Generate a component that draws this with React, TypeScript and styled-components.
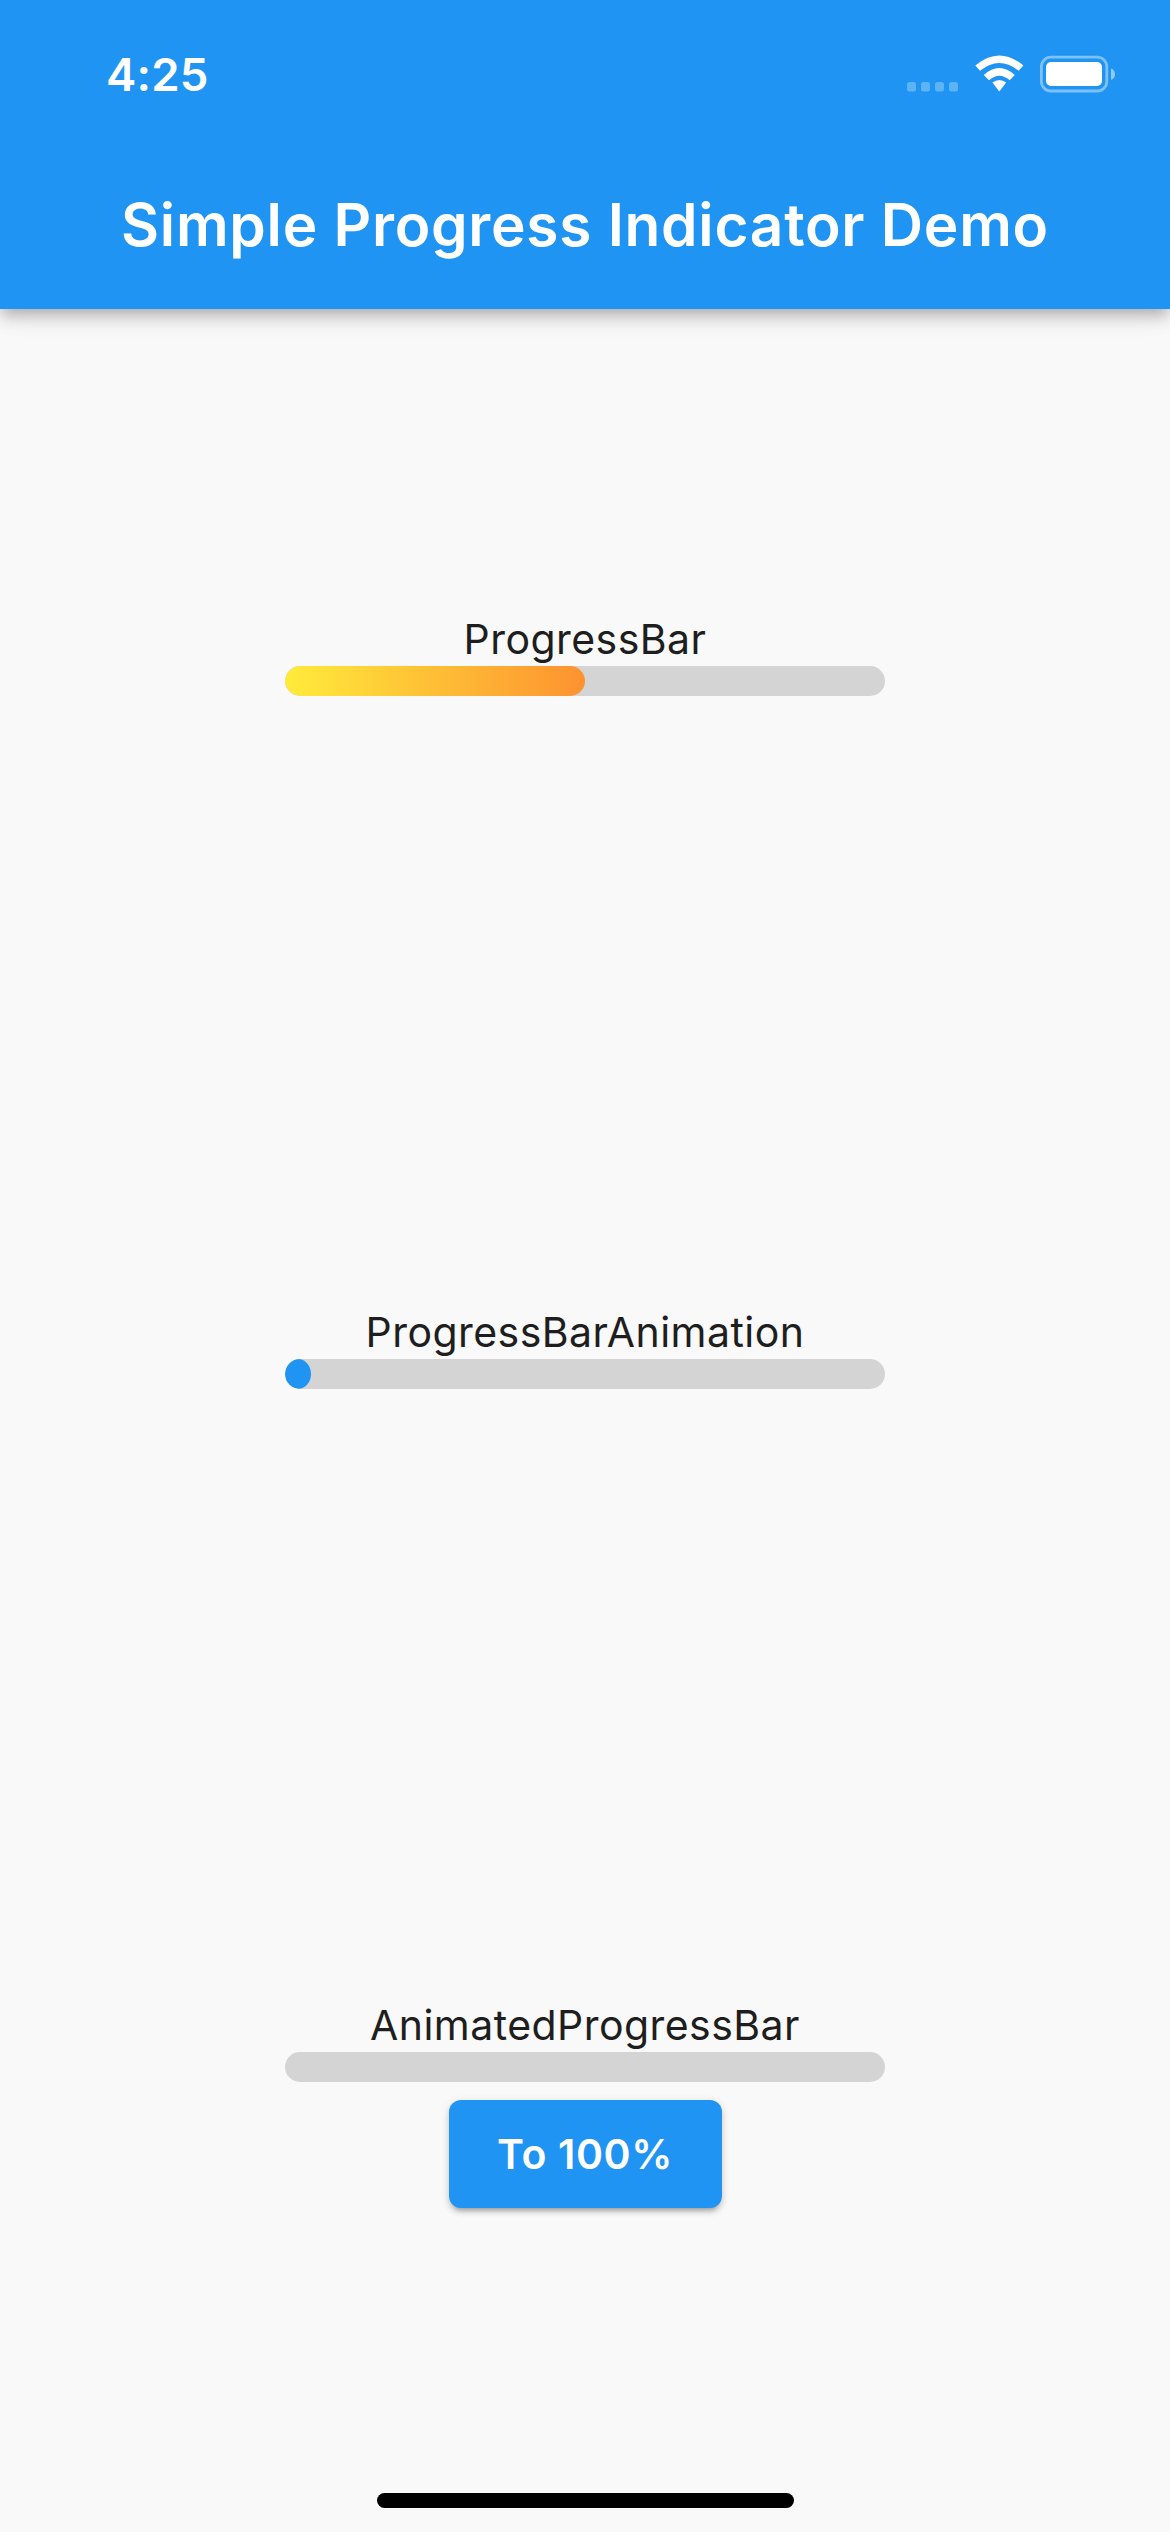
import React from "react";
import styled, { createGlobalStyle } from "styled-components";

const Global = createGlobalStyle`
  *, *::before, *::after { box-sizing: border-box; }
  html, body { margin: 0; padding: 0; background: #f9f9f9; }
  body { font-family: Inter, Roboto, "Liberation Sans", sans-serif; }
`;

const Screen = styled.div`
  width: 1170px;
  height: 2532px;
  display: flex;
  flex-direction: column;
  overflow: hidden;
  background: #f9f9f9;
`;

const AppBar = styled.header`
  flex: none;
  height: 309px;
  display: flex;
  flex-direction: column;
  background: #2094f3;
  color: #fff;
  box-shadow: 0 6px 12px -3px rgba(0, 0, 0, 0.2), 0 12px 15px rgba(0, 0, 0, 0.1), 0 3px 30px rgba(0, 0, 0, 0.08);
`;

const StatusBar = styled.div`
  height: 141px;
  padding: 48px 55px 0 106px;
  display: flex;
  justify-content: space-between;
  align-items: flex-start;
`;

const Clock = styled.span`
  font-size: 45.5px;
  line-height: 54px;
  font-weight: 570;
  letter-spacing: 0.2px;
  white-space: nowrap;
`;

const StatusIcons = styled.svg`
  display: block;
  width: 210px;
  height: 40px;
  margin-top: 5px;
`;

const Title = styled.h1`
  margin: 0;
  height: 168px;
  line-height: 168px;
  text-align: center;
  font-size: 58.5px;
  font-weight: 570;
  letter-spacing: 0.75px;
  white-space: nowrap;
`;

const Body = styled.main`
  flex: 1;
  min-height: 0;
  display: flex;
  flex-direction: column;
  align-items: center;
  padding-top: 303px;
  gap: 609px;
`;

const Section = styled.section`
  flex: none;
  display: flex;
  flex-direction: column;
  align-items: center;
`;

const Label = styled.span`
  font-size: 41px;
  line-height: 54px;
  letter-spacing: 0.45px;
  color: #1e1e1e;
  white-space: nowrap;
`;

const Track = styled.div`
  width: 600px;
  height: 30px;
  border-radius: 15px;
  background: #d4d4d4;
  overflow: hidden;
`;

const Fill = styled.div<{ $width: number; $paint: string }>`
  width: ${(p) => p.$width}px;
  height: 100%;
  border-radius: ${(p) => Math.min(15, p.$width / 2)}px / 15px;
  background: ${(p) => p.$paint};
`;

const RaisedButton = styled.button`
  margin-top: 18px;
  width: 273px;
  height: 108px;
  padding: 0;
  border: 0;
  border-radius: 12px;
  background: #2094f3;
  color: #fff;
  font-family: inherit;
  font-size: 41px;
  line-height: 106px;
  font-weight: 570;
  letter-spacing: 0.6px;
  box-shadow: 0 6px 4px -4px rgba(0, 0, 0, 0.2), 0 4px 6px rgba(0, 0, 0, 0.14), 0 2px 10px rgba(0, 0, 0, 0.1);
`;

const HomeArea = styled.footer`
  flex: none;
  height: 39px;
  display: flex;
  justify-content: center;
  align-items: flex-start;
`;

const HomeIndicator = styled.div`
  width: 417px;
  height: 15px;
  border-radius: 8px;
  background: #000;
`;

export default function App() {
  return (
    <>
      <Global />
      <Screen>
        <AppBar>
          <StatusBar>
            <Clock>4:25</Clock>
            <StatusIcons viewBox="905 53 210 40" fill="#fff">
              <g opacity="0.28">
                {[907, 921, 935, 949].map((x) => (
                  <rect key={x} x={x} y={82} width={9} height={9.5} rx={2.5} />
                ))}
              </g>
              <path d="M975.3 65.5Q999.3 45.5 1023.4 65.5L1018.6 70.8Q999.3 55.2 980 70.8Z" />
              <path d="M983.8 75Q999.3 61.2 1014.8 75L1009.7 80.2Q999.3 71.2 989 80.2Z" />
              <path d="M992.4 82.6Q999.3 77.2 1006.2 82.6L999.3 91.4Z" />
              <rect x="1041.4" y="57.2" width="65.4" height="33.8" rx="9.5" fill="none" stroke="#fff" strokeOpacity="0.42" strokeWidth="2.8" />
              <rect x="1046" y="62" width="56" height="24" rx="5" />
              <path opacity="0.5" d="M1111 68.6Q1115 70.4 1115 74.3T1111 80Z" />
            </StatusIcons>
          </StatusBar>
          <Title>Simple Progress Indicator Demo</Title>
        </AppBar>
        <Body>
          <Section>
            <Label>ProgressBar</Label>
            <Track>
              <Fill $width={300} $paint="linear-gradient(90deg, #ffeb3b, #fd9230)" />
            </Track>
          </Section>
          <Section>
            <Label>ProgressBarAnimation</Label>
            <Track>
              <Fill $width={26} $paint="#2094f3" />
            </Track>
          </Section>
          <Section>
            <Label>AnimatedProgressBar</Label>
            <Track />
            <RaisedButton>To 100%</RaisedButton>
          </Section>
        </Body>
        <HomeArea>
          <HomeIndicator />
        </HomeArea>
      </Screen>
    </>
  );
}
